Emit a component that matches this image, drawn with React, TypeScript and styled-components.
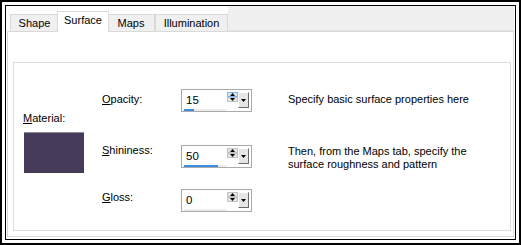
import { createGlobalStyle } from 'styled-components'
import styled from 'styled-components'

const GlobalStyle = createGlobalStyle`
  html, body {
    margin: 0;
    padding: 0;
    background: #fff;
  }
  body {
    font-family: "Liberation Sans", Arial, sans-serif;
    font-size: 11px;
    color: #000;
  }
`

const OuterFrame = styled.div`
  box-sizing: border-box;
  width: 521px;
  height: 245px;
  border: 2px solid #000;
  padding: 3px;
  background: #fff;
`

const InnerFrame = styled.div`
  box-sizing: border-box;
  height: 100%;
  border: 1px solid #000;
  padding: 0 1px 2px 1px;
  display: flex;
  flex-direction: column;
`

const TabStrip = styled.div`
  display: flex;
  align-items: flex-end;
  height: 25px;
  padding-left: 3px;
  position: relative;
  z-index: 1;
`

const Tab = styled.div<{ $width: number; $active?: boolean }>`
  box-sizing: border-box;
  width: ${p => p.$width}px;
  height: ${p => (p.$active ? 21 : 17)}px;
  margin: ${p => (p.$active ? '0 -2px -1px' : '0')};
  border: 1px solid #d9d9d9;
  border-bottom: none;
  background: ${p => (p.$active ? '#fff' : '#f0f0f0')};
  position: relative;
  z-index: ${p => (p.$active ? 2 : 1)};
  display: flex;
  justify-content: center;
  align-items: ${p => (p.$active ? 'flex-start' : 'center')};
  padding-top: ${p => (p.$active ? '2px' : '0')};
  line-height: 13px;
`

const StripFiller = styled.div`
  flex: 1;
  align-self: stretch;
  background: #f0f0f0;
  border-bottom: 1px solid #e3e3e3;
  box-sizing: border-box;
`

const Panel = styled.div`
  flex: 1;
  border: 1px solid #d9d9d9;
  background: #fff;
  padding: 30px 2px 5px 5px;
  display: flex;
`

const GroupBox = styled.div`
  flex: 1;
  border: 1px solid #dcdcdc;
  display: grid;
  grid-template-columns: 88px 79px 107px 1fr;
  grid-template-rows: 56px 44px 23px;
  padding-top: 26px;
  align-content: start;
`

const MaterialCol = styled.div`
  grid-column: 1;
  grid-row: 1 / span 3;
  padding: 23px 0 0 9px;
  display: flex;
  flex-direction: column;
`

const Label = styled.div<{ $offset?: number }>`
  line-height: 13px;
  margin-top: ${p => p.$offset ?? 0}px;
  white-space: nowrap;
`

const Key = styled.span`
  text-decoration: underline;
  text-underline-offset: 1px;
`

const Swatch = styled.div<{ $color: string }>`
  width: 60px;
  height: 41px;
  margin-top: 7px;
  margin-left: 1px;
  box-sizing: border-box;
  border-top: 1px solid #8e8a96;
  background: ${p => p.$color};
`

const SpinBox = styled.div`
  box-sizing: border-box;
  width: 71px;
  height: 23px;
  border: 1px solid #a9a9a9;
  background: #fff;
  display: flex;
  padding: 2px 2px 0 1px;
`

const ValueCol = styled.div`
  flex: 1;
  display: flex;
  flex-direction: column;
  margin-top: -2px;
`

const Value = styled.div`
  height: 19px;
  line-height: 21px;
  padding-left: 3px;
  font-size: 11.5px;
`

const Track = styled.div`
  height: 2px;
  margin: 0 1px;
  background: #ececec;
`

const Fill = styled.div`
  height: 100%;
  background: #3d8ee3;
`

const Arrows = styled.div`
  display: flex;
  flex-direction: column;
  width: 11px;
`

const ArrowBtn = styled.div<{ $hot?: boolean }>`
  box-sizing: border-box;
  height: 5px;
  display: flex;
  align-items: center;
  justify-content: center;
  background: ${p => (p.$hot ? '#d8e8f8' : '#e4e4e4')};
  border: 1px solid ${p => (p.$hot ? '#7db3ea' : '#c4c4c4')};
  svg {
    display: block;
  }
`

const DropBtn = styled.div`
  box-sizing: border-box;
  width: 11px;
  height: 16px;
  background: #e6e6e6;
  border-top: 1px solid #fff;
  border-left: 1px solid #fff;
  border-right: 1px solid #6a6a6a;
  border-bottom: 1px solid #6a6a6a;
  display: flex;
  align-items: center;
  justify-content: center;
`

const Desc = styled.div<{ $offset?: number }>`
  line-height: 12.5px;
  margin-top: ${p => p.$offset ?? 0}px;
  white-space: nowrap;
`

function Tri({ down }: { down?: boolean }) {
  return (
    <svg width="5" height="3" viewBox="0 0 5 3">
      <path d={down ? 'M0 0H5L2.5 3Z' : 'M0 3H5L2.5 0Z'} fill="#000" />
    </svg>
  )
}

function Spinner({ value, hot }: { value: number; hot?: boolean }) {
  return (
    <SpinBox>
      <ValueCol>
        <Value>{value}</Value>
        <Track>
          <Fill style={{ width: `${Math.round(value * 0.68)}px` }} />
        </Track>
      </ValueCol>
      <Arrows>
        <ArrowBtn $hot={hot}><Tri /></ArrowBtn>
        <ArrowBtn><Tri down /></ArrowBtn>
      </Arrows>
      <DropBtn><Tri down /></DropBtn>
    </SpinBox>
  )
}

export default function App() {
  return (
    <>
      <GlobalStyle />
      <OuterFrame>
        <InnerFrame>
          <TabStrip>
            <Tab $width={49}>Shape</Tab>
            <Tab $width={52} $active>Surface</Tab>
            <Tab $width={48}>Maps</Tab>
            <Tab $width={73}>Illumination</Tab>
            <StripFiller />
          </TabStrip>
          <Panel>
            <GroupBox>
              <MaterialCol>
                <Label><Key>M</Key>aterial:</Label>
                <Swatch $color="#463b59" />
              </MaterialCol>

              <Label $offset={4} style={{ gridColumn: 2, gridRow: 1 }}><Key>O</Key>pacity:</Label>
              <div style={{ gridColumn: 3, gridRow: 1 }}><Spinner value={15} hot /></div>
              <Desc $offset={4} style={{ gridColumn: 4, gridRow: 1 }}>Specify basic surface properties here</Desc>

              <Label $offset={-1} style={{ gridColumn: 2, gridRow: 2 }}><Key>S</Key>hininess:</Label>
              <div style={{ gridColumn: 3, gridRow: 2 }}><Spinner value={50} /></div>
              <Desc $offset={0} style={{ gridColumn: 4, gridRow: 2 }}>
                Then, from the Maps tab, specify the<br />surface roughness and pattern
              </Desc>

              <Label $offset={2} style={{ gridColumn: 2, gridRow: 3 }}><Key>G</Key>loss:</Label>
              <div style={{ gridColumn: 3, gridRow: 3 }}><Spinner value={0} /></div>
            </GroupBox>
          </Panel>
        </InnerFrame>
      </OuterFrame>
    </>
  )
}
